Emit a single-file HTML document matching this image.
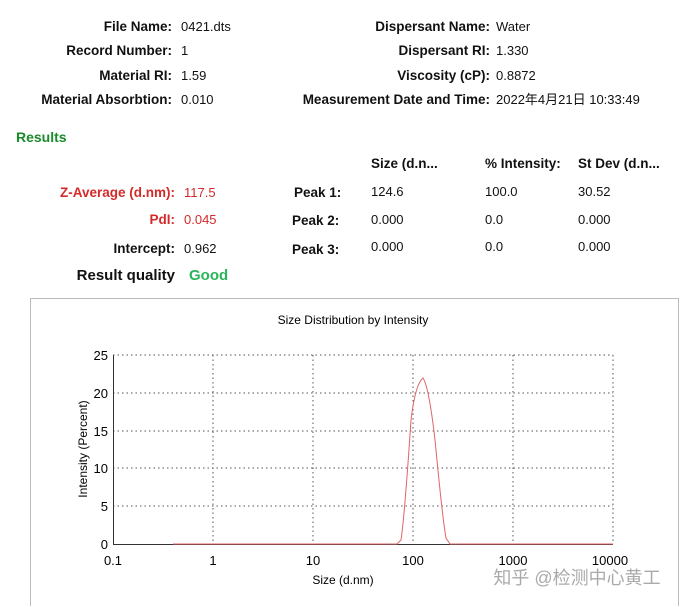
<!DOCTYPE html>
<html><head><meta charset="utf-8"><style>
body{margin:0;width:688px;height:606px;background:#fff;font-family:"Liberation Sans","Noto Sans CJK SC",sans-serif;font-size:13px;color:#111;position:relative;overflow:hidden}
.t{position:absolute;white-space:nowrap;line-height:16px}
.r{text-align:right}
.b{font-weight:bold;font-size:13.5px}
.red{color:#d42a2a}
</style></head><body>
<div class="t b r" style="right:516px;top:19px">File Name:</div><div class="t" style="left:181px;top:19px">0421.dts</div>
<div class="t b r" style="right:516px;top:43px">Record Number:</div><div class="t" style="left:181px;top:43px">1</div>
<div class="t b r" style="right:516px;top:68px">Material RI:</div><div class="t" style="left:181px;top:68px">1.59</div>
<div class="t b r" style="right:516px;top:92px">Material Absorbtion:</div><div class="t" style="left:181px;top:92px">0.010</div>
<div class="t b r" style="right:198px;top:19px">Dispersant Name:</div><div class="t" style="left:496px;top:19px">Water</div>
<div class="t b r" style="right:198px;top:43px">Dispersant RI:</div><div class="t" style="left:496px;top:43px">1.330</div>
<div class="t b r" style="right:198px;top:68px">Viscosity (cP):</div><div class="t" style="left:496px;top:68px">0.8872</div>
<div class="t b r" style="right:198px;top:92px">Measurement Date and Time:</div><div class="t" style="left:496px;top:92px">2022年4月21日 10:33:49</div>
<div class="t b" style="left:16px;top:129px;color:#1a8a2a;font-size:14px">Results</div>
<div class="t b" style="left:371px;top:156px">Size (d.n...</div>
<div class="t b" style="left:485px;top:156px">% Intensity:</div>
<div class="t b" style="left:578px;top:156px">St Dev (d.n...</div>
<div class="t b r red" style="right:513px;top:185px">Z-Average (d.nm):</div><div class="t red" style="left:184px;top:185px">117.5</div>
<div class="t b r red" style="right:513px;top:212px">PdI:</div><div class="t red" style="left:184px;top:212px">0.045</div>
<div class="t b r" style="right:513px;top:241px">Intercept:</div><div class="t" style="left:184px;top:241px">0.962</div>
<div class="t b r" style="right:513px;top:268px;font-size:15px">Result quality</div><div class="t b" style="left:189px;top:268px;color:#2ab55a;font-size:15px">Good</div>
<div class="t b" style="left:294px;top:185px">Peak 1:</div><div class="t" style="left:371px;top:184px">124.6</div><div class="t" style="left:485px;top:184px">100.0</div><div class="t" style="left:578px;top:184px">30.52</div>
<div class="t b" style="left:292px;top:213px">Peak 2:</div><div class="t" style="left:371px;top:212px">0.000</div><div class="t" style="left:485px;top:212px">0.0</div><div class="t" style="left:578px;top:212px">0.000</div>
<div class="t b" style="left:292px;top:242px">Peak 3:</div><div class="t" style="left:371px;top:239px">0.000</div><div class="t" style="left:485px;top:239px">0.0</div><div class="t" style="left:578px;top:239px">0.000</div>
<svg style="position:absolute;left:0;top:0" width="688" height="606" font-family="Liberation Sans, Noto Sans CJK SC, sans-serif">
<path d="M30.5 606V298.5H678.5V606" fill="none" stroke="#bbb"/>
<text x="353" y="324" font-size="12" text-anchor="middle">Size Distribution by Intensity</text>
<g stroke="#555" stroke-dasharray="1.5,3" stroke-width="1">
<line x1="113" y1="355" x2="613" y2="355"/><line x1="113" y1="393" x2="613" y2="393"/><line x1="113" y1="431" x2="613" y2="431"/><line x1="113" y1="468" x2="613" y2="468"/><line x1="113" y1="506" x2="613" y2="506"/>
<line x1="213" y1="355" x2="213" y2="544"/><line x1="313" y1="355" x2="313" y2="544"/><line x1="413" y1="355" x2="413" y2="544"/><line x1="513" y1="355" x2="513" y2="544"/><line x1="613" y1="355" x2="613" y2="544"/>
</g>
<line x1="113.5" y1="355" x2="113.5" y2="544" stroke="#333"/>
<line x1="113" y1="544.5" x2="613" y2="544.5" stroke="#333"/>
<g font-size="13" text-anchor="end"><text x="108" y="360">25</text><text x="108" y="398">20</text><text x="108" y="436">15</text><text x="108" y="473">10</text><text x="108" y="511">5</text><text x="108" y="549">0</text></g>
<g font-size="13" text-anchor="middle"><text x="113" y="565">0.1</text><text x="213" y="565">1</text><text x="313" y="565">10</text><text x="413" y="565">100</text><text x="513" y="565">1000</text><text x="610" y="565">10000</text></g>
<text x="343" y="584" font-size="12" text-anchor="middle">Size (d.nm)</text>
<text transform="translate(87,449) rotate(-90)" font-size="12" text-anchor="middle">Intensity (Percent)</text>
<path fill="none" stroke="#d66" stroke-width="1" d="M173 544H397L401 540C404 520 407 480 411 420C414 395 418 382 423 378C427 384 431 405 435 440C439 480 442 515 446 538L450 544H613"/>
<text x="577" y="584" font-size="18" fill="#aaa" text-anchor="middle">知乎 @检测中心黄工</text>
</svg>
</body></html>
